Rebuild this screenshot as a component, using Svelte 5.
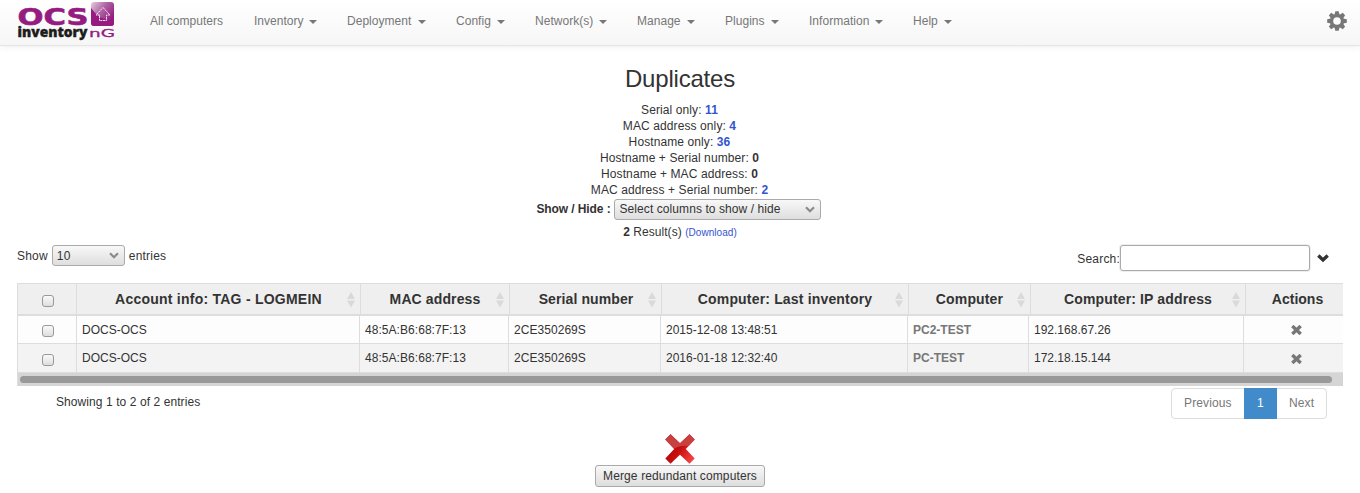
<script>
  const menus = [
    { label: 'All computers', w: 74, caret: false },
    { label: 'Inventory', w: 49, caret: true },
    { label: 'Deployment', w: 65, caret: true },
    { label: 'Config', w: 35, caret: true },
    { label: 'Network(s)', w: 58, caret: true },
    { label: 'Manage', w: 44, caret: true },
    { label: 'Plugins', w: 40, caret: true },
    { label: 'Information', w: 60, caret: true },
    { label: 'Help', w: 25, caret: true }
  ];
  const stats = [
    { label: 'Serial only:', value: 11, link: true },
    { label: 'MAC address only:', value: 4, link: true },
    { label: 'Hostname only:', value: 36, link: true },
    { label: 'Hostname + Serial number:', value: 0, link: false },
    { label: 'Hostname + MAC address:', value: 0, link: false },
    { label: 'MAC address + Serial number:', value: 2, link: true }
  ];
  const columns = [
    'Account info: TAG - LOGMEIN',
    'MAC address',
    'Serial number',
    'Computer: Last inventory',
    'Computer',
    'Computer: IP address'
  ];
  const rows = [
    ['DOCS-OCS', '48:5A:B6:68:7F:13', '2CE350269S', '2015-12-08 13:48:51', 'PC2-TEST', '192.168.67.26'],
    ['DOCS-OCS', '48:5A:B6:68:7F:13', '2CE350269S', '2016-01-18 12:32:40', 'PC-TEST', '172.18.15.144']
  ];
</script>

{#snippet chevron()}
  <svg class="chev" width="10" height="7" viewBox="0 0 10 7"><path d="M1 1.2 5 5.2 9 1.2" fill="none" stroke="#8b8c88" stroke-width="2.2" /></svg>
{/snippet}

<nav>
  <svg class="logo" width="98" height="40" viewBox="0 0 98 40">
    <defs>
      <linearGradient id="tile" x1="0" y1="0" x2="0.9" y2="0.7">
        <stop offset="0" stop-color="#e5cce1" />
        <stop offset="0.5" stop-color="#b066a4" />
        <stop offset="1" stop-color="#951b81" />
      </linearGradient>
    </defs>
    <text class="ocs" x="-0.5" y="23.4" textLength="71" lengthAdjust="spacingAndGlyphs">OCS</text>
    <rect x="73" y="0" width="23" height="24" rx="3" fill="url(#tile)" />
    <path d="M73 6C79 14 84 18 96 19V21Q96 24 93 24H76Q73 24 73 21Z" fill="#951b81" />
    <path d="M85 5.5 92 13H88.5V18.5H81.5V13H78Z" fill="none" stroke="#f5e8f3" stroke-width="1" stroke-dasharray="2 .6" />
    <text class="inv" x="-0.5" y="35" textLength="70" lengthAdjust="spacingAndGlyphs">inventory</text>
    <text class="ng" x="71" y="34.7" textLength="26" lengthAdjust="spacingAndGlyphs">nG</text>
  </svg>
  <ul>
    {#each menus as m}
      <li><span style="width:{m.w}px">{m.label}</span>{#if m.caret}<i class="caret"></i>{/if}</li>
    {/each}
  </ul>
  <svg class="gear" width="20" height="20" viewBox="-10 -10 20 20">
    <g fill="#777">
      {#each [0, 45, 90, 135] as a}
        <path d="M-1.7 -9.8H1.7L2.6 -6V6L1.7 9.8H-1.7L-2.6 6V-6Z" transform="rotate({a})" />
      {/each}
      <circle r="7" />
    </g>
    <circle r="3.8" fill="#fbfbfb" />
  </svg>
</nav>

<main>
  <h3><span>Duplicates</span></h3>
  <div class="stats">
    {#each stats as s}
      <div>{s.label} <b class:link={s.link}>{s.value}</b></div>
    {/each}
  </div>
  <div class="toggle">
    <b>Show / Hide :</b>
    <div class="select wide"><span>Select columns to show / hide</span>{@render chevron()}</div>
  </div>
  <div class="result"><b>2</b> Result(s) <a>(Download)</a></div>

  <div class="tools">
    <div class="length">Show <div class="select"><span>10</span>{@render chevron()}</div> entries</div>
    <div class="search">
      <span>Search:</span><input type="text" aria-label="Search" />
      <svg width="12" height="9" viewBox="0 0 12 9"><path d="M1.3 1.6 6 6 10.7 1.6" fill="none" stroke="#333" stroke-width="3.4" /></svg>
    </div>
  </div>

  <div class="table">
    <div class="row head">
      <div class="center"><i class="check"></i></div>
      {#each columns as c, i}
        <div class="th"><span class="h{i}">{c}</span>
          <svg class="sort" width="8" height="16" viewBox="0 0 8 16"><path d="M4 0 8 7H0ZM0 8.5H8L4 15.5Z" fill="#d9d9d9" /></svg>
        </div>
      {/each}
      <div class="th act"><span>Actions</span></div>
    </div>
    {#each rows as r, n}
      <div class="row body" class:odd={n === 1}>
        <div class="center"><i class="check"></i></div>
        {#each r as c, i}
          <div class:name={i === 4}><span class="c{i}">{c}</span></div>
        {/each}
        <div class="x">
          <svg width="11" height="10" viewBox="0 0 11 10"><path d="M1.3 1 9.7 9M9.7 1 1.3 9" stroke="#777" stroke-width="3.4" /></svg>
        </div>
      </div>
    {/each}
    <div class="scroll"><i></i></div>
  </div>

  <div class="foot">
    <span class="info">Showing 1 to 2 of 2 entries</span>
    <div class="pages"><span class="prev">Previous</span><span class="on">1</span><span class="next">Next</span></div>
  </div>

  <div class="merge">
    <svg width="30" height="30" viewBox="0 0 30 30">
      <defs>
        <linearGradient id="red" x1="0" y1="0.3" x2="1" y2="1">
          <stop offset="0" stop-color="#a80000" />
          <stop offset="0.45" stop-color="#c80f0f" />
          <stop offset="1" stop-color="#ff5050" />
        </linearGradient>
      </defs>
      <path d="M5.5.3 15 9.3 24.5.3 29.7 5.5 20.8 15 29.7 24.5 24.5 29.7 15 20.7 5.5 29.7.3 24.5 9.2 15 .3 5.5Z" fill="url(#red)" />
      <path d="M5.5.3 15 9.3 24.5.3 29.7 5.5 23.7 11.9Q15 10.8 9 14.8L.3 5.5Z" fill="#c94040" />
    </svg>
    <button>Merge redundant computers</button>
  </div>
</main>

<style>
  :global(body) { background: #fff; overflow: hidden; }
  :global(#app) { font: 12px/16px "Liberation Sans", Arial, sans-serif; color: #333; }
  nav, main, nav *, main * { box-sizing: border-box; }
  nav {
    display: flex; height: 46px; padding: 0 13px 0 18px;
    background: linear-gradient(#fff, #f6f6f6); border-bottom: 1px solid #e5e5e5;
    box-shadow: 0 1px 6px rgba(0, 0, 0, .07);
  }
  .logo { margin-top: 2px; flex: none; overflow: visible; }
  .ocs { font: 700 22.5px "DejaVu Sans", sans-serif; fill: #951b81; stroke: #951b81; stroke-width: .6; }
  .inv { font: 900 14.5px "Open Sans", sans-serif; fill: #1d1d1b; stroke: #1d1d1b; stroke-width: .4; }
  .ng { font: 11px "DejaVu Sans", sans-serif; fill: #951b81; stroke: #951b81; stroke-width: .3; }
  ul { display: flex; flex: 1; gap: 30px; list-style: none; margin: 0 0 0 34px; padding: 0; }
  li { display: flex; color: #777; padding-top: 13px; white-space: nowrap; height: 40px; letter-spacing: .03px; }
  li span { display: block; }
  .caret { border: 4px solid transparent; border-top-color: #777; border-bottom: 0; height: 4px; margin: 7px 0 0 6px; }
  .gear { margin-top: 11px; margin-right: 0; }
  h3 { font-size: 24px; line-height: 26px; font-weight: 400; text-align: center; margin: 20px 0 10px; letter-spacing: -.2px; }
  .stats { text-align: center; letter-spacing: .1px; padding-right: 1px; }
  .link, a { color: #3354d1; }
  .toggle { display: flex; justify-content: center; align-items: center; height: 22px; gap: 4px; padding-right: 2px; }
  .toggle b { letter-spacing: -.15px; word-spacing: .2px; }
  .select {
    display: inline-flex; align-items: center; justify-content: space-between; width: 73px; height: 21px;
    padding: 0 5px 0 4px; border: 1px solid #aaa; border-radius: 3px;
    background: linear-gradient(#f8f8f8, #dedede);
  }
  .wide { width: 207px; letter-spacing: .08px; }
  .result { text-align: center; height: 16px; margin-top: 4px; letter-spacing: .05px; }
  .result a { font-size: 10px; }
  .tools { display: flex; justify-content: space-between; height: 43px; padding: 5px 31px 0 17px; }
  .length { display: flex; align-items: center; gap: 4px; height: 21px; letter-spacing: .2px; }
  .search { display: flex; align-items: center; height: 26px; }
  .search span { padding-top: 1px; letter-spacing: .2px; }
  .search svg { margin: 0 0 0 7px; }
  input { width: 190px; height: 26px; border: 1px solid #aaa; border-radius: 3px; padding: 0; background: #fff; box-shadow: 0 0 0 1px #eee; }
  .table { width: 1326px; margin-left: 17px; border-left: 1px solid #ddd; overflow: hidden; }
  .row { display: grid; }
  .row > div { border-right: 1px solid #ddd; white-space: nowrap; }
  .row > div:last-child { border-right: 0; }
  .head { grid-template-columns: 59px 284px 149px 152px 247px 122px 215px 97px; height: 33px; background: #efefef; border-top: 1px solid #ddd; border-bottom: 2px solid #ddd; }
  .body { grid-template-columns: 59px 283px 149px 152px 247px 121px 215px 99px; height: 28px; background: #fdfdfd; border-bottom: 1px solid #ddd; }
  .odd { height: 29px; background: #f3f3f3; }
  .center { display: flex; align-items: center; justify-content: center; padding: 4px 0 0 2px; }
  .body .center { padding-top: 3px; }
  .check { width: 12px; height: 12px; border: 1px solid #999; border-radius: 3px; background: linear-gradient(#fafafa, #dedede); }
  .th { display: grid; grid-template-columns: 1fr; align-items: center; justify-items: center; font-weight: 700; font-size: 14px; }
  .th > * { grid-area: 1 / 1; }
  .h0 { letter-spacing: .24px; }
  .h1 { letter-spacing: .12px; }
  .h2 { letter-spacing: .1px; margin-left: 1px; }
  .h3 { letter-spacing: .17px; }
  .h4 { letter-spacing: .15px; }
  .h5 { letter-spacing: .14px; }
  .sort { justify-self: end; margin: 2px 5px 0 0; }
  .act { padding-left: 6px; }
  .body > div:not(.center):not(.x) { padding: 6px 0 0 5px; }
  .c1, .c2 { letter-spacing: .05px; }
  .name { font-weight: 700; color: #777; }
  .x { display: flex; align-items: center; justify-content: center; padding: 1px 0 0 5px; }
  .scroll { height: 13px; background: #d5d5d5; padding: 3px 11px 3px 2px; }
  .scroll i { display: block; height: 7px; border-radius: 4px; background: #999; }
  .foot { display: flex; justify-content: space-between; padding: 2px 33px 0 56px; height: 48px; }
  .info { padding-top: 6px; letter-spacing: .08px; }
  .pages { display: flex; height: 31px; width: 156px; border: 1px solid #ddd; border-radius: 4px; color: #777; line-height: 28px; letter-spacing: .13px; }
  .pages span { padding-left: 12px; }
  .prev { width: 72px; }
  .pages .on { width: 33px; background: #428bca; color: #fff; margin: -1px 0; padding: 1px 0 0; text-align: center; }
  .merge { display: flex; flex-direction: column; align-items: center; }
  .merge svg { display: block; }
  button { font: inherit; color: #333; width: 170px; height: 22px; padding: 0; border: 1px solid #aaa; border-radius: 3px; background: linear-gradient(#f8f8f8, #dedede); margin-top: 1px; white-space: nowrap; letter-spacing: .13px; }
</style>
